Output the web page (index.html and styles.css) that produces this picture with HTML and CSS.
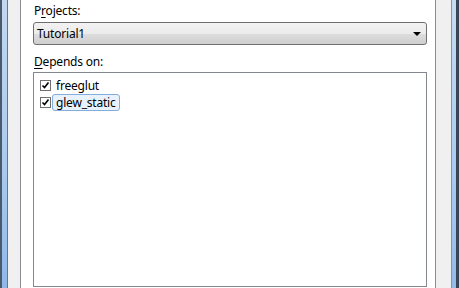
FILE: index.html
```html
<!DOCTYPE html>
<html lang="en">
<head>
    <meta charset="UTF-8">
    <title>Project Dependencies</title>
    <link rel="stylesheet" href="styles.css">
</head>
<body>
    <div class="window">
        <div class="frame frame-left"></div>
        <div class="client">
            <div class="page">
                <div class="label">P<u>r</u>ojects:</div>
                <div class="combo">
                    <span>Tutorial1</span>
                    <span class="arrow"></span>
                </div>
                <div class="label label-list"><u>D</u>epends on:</div>
                <div class="list">
                    <div class="item">
                        <svg class="check" width="11" height="11" viewBox="0 0 11 11">
                            <rect x="0.5" y="0.5" width="10" height="10" fill="#fff" stroke="#707070"/>
                            <path d="M2.5 5.5 L4.5 7.5 L8.5 2.5" fill="none" stroke="#000" stroke-width="1.6"/>
                        </svg>
                        <span class="name">freeglut</span>
                    </div>
                    <div class="item">
                        <svg class="check" width="11" height="11" viewBox="0 0 11 11">
                            <rect x="0.5" y="0.5" width="10" height="10" fill="#fff" stroke="#707070"/>
                            <path d="M2.5 5.5 L4.5 7.5 L8.5 2.5" fill="none" stroke="#000" stroke-width="1.6"/>
                        </svg>
                        <span class="name selected">glew_static</span>
                    </div>
                </div>
            </div>
        </div>
        <div class="frame frame-right"></div>
    </div>
</body>
</html>
```

FILE: styles.css
```css
body {
    margin: 0;
    padding: 0;
    font-family: "Noto Sans", "Open Sans", sans-serif;
    font-size: 12px;
    letter-spacing: -0.2px;
    color: #000;
    background: #f0f0f0;
}

.window {
    display: flex;
    width: 459px;
    height: 288px;
    overflow: hidden;
}

.frame {
    flex: none;
}

.frame-left {
    width: 5px;
    border-left: 2px solid #4a5a6c;
    border-right: 1px solid #6b7480;
    background: linear-gradient(#c2d8ef, #a9c9ee 60%, #8fb8e8);
}

.frame-right {
    width: 4px;
    border-left: 1px solid #8a939e;
    border-right: 3px solid #3a4656;
    background: linear-gradient(#c7dcf2, #a9cbf1 60%, #93bbea);
}

.client {
    flex: 1;
    display: flex;
    padding: 0 15px 0 12px;
    background: #f0f0f0;
}

.page {
    flex: 1;
    background: #fff;
    border-left: 1px solid #898c95;
    border-right: 1px solid #898c95;
    padding: 3px 8px 0 12px;
    display: flex;
    flex-direction: column;
}

.label {
    line-height: 16px;
    padding-left: 1px;
    margin-bottom: 3px;
}

.label u {
    text-decoration-thickness: 1px;
    text-underline-offset: 2px;
}

.label-list {
    margin-top: 9px;
    margin-bottom: 2px;
}

.combo {
    height: 21px;
    border: 1px solid #707070;
    border-radius: 3px;
    background: linear-gradient(#f2f2f2, #ebebeb 50%, #dddddd 51%, #cfcfcf);
    display: flex;
    align-items: center;
    justify-content: space-between;
    padding: 0 5px 0 3px;
}

.arrow {
    width: 0;
    height: 0;
    border-left: 4px solid transparent;
    border-right: 4px solid transparent;
    border-top: 4px solid #000;
}

.list {
    flex: 1;
    border: 1px solid #828790;
    margin-bottom: 1px;
    padding: 4px 0 0 6px;
}

.item {
    display: flex;
    align-items: center;
    height: 17px;
}

.check {
    flex: none;
    margin-right: 1px;
}

.name {
    padding: 0 3px;
    line-height: 15px;
    border: 1px solid transparent;
}

.name.selected {
    background: #e8f2fd;
    border-color: #84acdd;
    border-radius: 3px;
}
```
